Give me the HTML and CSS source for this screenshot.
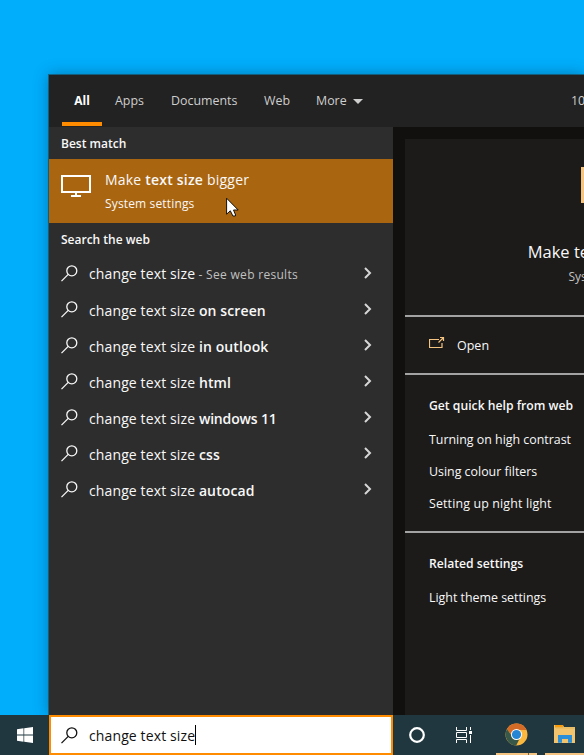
FILE: index.html
```
<!DOCTYPE html>
<html lang="en">
<head>
<meta charset="utf-8">
<title>Search</title>
<link rel="stylesheet" href="styles.css">
</head>
<body>
<svg width="0" height="0" class="defs">
  <symbol id="mag" viewBox="0 0 17 17"><circle cx="10.8" cy="5.8" r="5" fill="none" stroke="currentColor" stroke-width="1.3"/><path d="M7.2 9.4L.5 16.1" stroke="currentColor" stroke-width="1.3"/></symbol>
  <symbol id="chev" viewBox="0 0 8 12"><path d="M1 1l5 5-5 5" fill="none" stroke="currentColor" stroke-width="2"/></symbol>
</svg>
<div class="desktop">
  <main class="flyout">
    <nav class="tabs">
      <span class="tab active"><span class="w-all">All</span></span>
      <span class="tab apps">Apps</span>
      <span class="tab docs">Documents</span>
      <span class="tab web">Web</span>
      <span class="tab more">More<i class="caret"></i></span>
      <span class="points">10</span>
    </nav>
    <div class="body">
      <section class="results">
        <h2>Best match</h2>
        <div class="best">
          <svg class="monitor" width="30" height="23" viewBox="0 0 30 23"><path d="M1 1h28v16H1zM15 17v4M10 21h10" fill="none" stroke="#fff" stroke-width="2"/></svg>
          <div><div class="best-title">Make <b>text size</b> bigger</div><div class="best-sub">System settings</div></div>
        </div>
        <h2>Search the web</h2>
        <div class="row first"><svg class="mag"><use href="#mag"/></svg><span>change text size<small> - See web results</small></span><svg class="chev"><use href="#chev"/></svg></div>
        <div class="row"><svg class="mag"><use href="#mag"/></svg><span>change text size <b>on screen</b></span><svg class="chev"><use href="#chev"/></svg></div>
        <div class="row"><svg class="mag"><use href="#mag"/></svg><span>change text size <b>in outlook</b></span><svg class="chev"><use href="#chev"/></svg></div>
        <div class="row"><svg class="mag"><use href="#mag"/></svg><span>change text size <b>html</b></span><svg class="chev"><use href="#chev"/></svg></div>
        <div class="row"><svg class="mag"><use href="#mag"/></svg><span>change text size <b class="tight">windows 11</b></span><svg class="chev"><use href="#chev"/></svg></div>
        <div class="row"><svg class="mag"><use href="#mag"/></svg><span>change text size <b>css</b></span><svg class="chev"><use href="#chev"/></svg></div>
        <div class="row"><svg class="mag"><use href="#mag"/></svg><span>change text size <b>autocad</b></span><svg class="chev"><use href="#chev"/></svg></div>
      </section>
      <section class="preview">
        <div class="card">
          <div class="hero"><div class="hero-icon"></div><div class="hero-title">Make text size bigger</div><div class="hero-sub">System settings</div></div>
          <div class="open"><svg width="16" height="12" viewBox="0 0 16 12"><path d="M10 2.500H.5v8h12.500V6M9.500 5.500L14 1M11 .5h3.500V4" fill="none" stroke="#f5c480" stroke-width="1.200"/></svg><span>Open</span></div>
          <div class="links">
            <h3>Get quick help from web</h3>
            <p>Turning on high contrast</p><p>Using colour filters</p><p class="wide">Setting up night light</p>
          </div>
          <div class="links related"><h3>Related settings</h3><p>Light theme settings</p></div>
        </div>
      </section>
    </div>
  </main>
  <footer class="taskbar">
    <div class="start"><svg width="16" height="16" viewBox="0 0 16 16" fill="#fff"><path d="M0 2.200L6.500 1.300V7.600H0zM7.200 1.200L16 0V7.600H7.200zM0 8.400H6.500V14.700L0 13.800zM7.200 8.400H16V16L7.200 14.800z"/></svg></div>
    <div class="search"><svg class="mag"><use href="#mag"/></svg><span class="query">change text size</span><i class="text-cursor"></i></div>
    <div class="task cortana"><svg width="16" height="16" viewBox="0 0 16 16"><circle cx="8" cy="8" r="6.800" fill="none" stroke="#fff" stroke-width="2.200"/></svg></div>
    <div class="task view"><svg width="17" height="16" viewBox="0 0 17 16"><path d="M.5 0v3.500h10V0M.5 16v-3.500h10V16M.5 5.500h10v5H.5zM14.500 0v3M14.500 8v8" fill="none" stroke="#fff"/><path d="M13 4h3v3h-3z" fill="#fff"/></svg></div>
    <div class="task running chrome"><svg width="23" height="23" viewBox="0 0 23 23"><circle cx="11.500" cy="11.500" r="11" fill="#fbb83f"/><path d="M2 6A11 11 0 0 1 21.500 7H11.500L7.500 13.500z" fill="#d46b27"/><path d="M2 6A11 11 0 0 0 11.200 22.500L15.500 14 7.300 13.500z" fill="#38594a"/><circle cx="11.500" cy="11.500" r="5.500" fill="#fff"/><circle cx="11.500" cy="11.500" r="4.600" fill="#2686d3"/></svg><i class="stack"></i></div>
    <div class="task running explorer"><svg width="22" height="18" viewBox="0 0 22 18"><path d="M0 0h9l1 2h11v16H0z" fill="#f2c46d"/><path d="M1 0h8v2.500H1z" fill="#f79b0c"/><path d="M2 3h19" stroke="#dfb65e"/><path d="M4 17.800V10h14v7.800h-4V14H8v3.800z" fill="#2b8ed8"/></svg></div>
  </footer>
  <svg class="pointer" width="13" height="20" viewBox="0 0 13 20"><path d="M.6 1.200V17.200L4.300 13.800 6.900 19H9.300L9.600 18 7.500 13H12.200z" fill="#fff" stroke="#16110b"/></svg>
</div>
</body>
</html>
```
FILE: styles.css
```
* { box-sizing: border-box; }
body { margin: 0; overflow: hidden; font-family: "Open Sans", "Noto Sans", sans-serif; color: #f8f8f8; }
h2, h3, p { margin: 0; }
svg { flex: none; display: block; }
.defs { position: absolute; }
b, h2, h3 { font-weight: 600; }
.desktop { width: 584px; height: 755px; display: flex; flex-direction: column; position: relative; overflow: hidden; background: #00aefc; white-space: nowrap; }
.flyout { margin: 75px 0 0 49px; height: 640px; width: 535px; box-shadow: 0 0 14px rgba(0, 30, 50, .4), 0 0 0 1px #176e91; display: flex; flex-direction: column; background: #2d2d2d; }
.tabs { height: 52px; flex: none; background: #222; display: flex; padding-left: 13px; font-size: 12.400px; line-height: 52px; color: #cecece; overflow: hidden; }
.tab { flex: none; }
.active { width: 40px; text-align: center; border-bottom: 4px solid #ff8c00; height: 51px; color: #fff; font-weight: 700; font-size: 12px; margin-right: 13px; }
.apps { width: 56px; }
.docs { width: 93px; }
.web { width: 52px; }
.more { display: flex; align-items: center; width: 255px; }
.caret { border: 5.500px solid transparent; border-top-color: #cecece; border-bottom: 0; margin-left: 6px; }
.body { display: flex; flex: 1; }
.results { width: 344px; background: #2d2d2d; flex: none; }
h2 { font-size: 12px; line-height: 30px; padding: 2px 0 0 12px; height: 32px; }
.best { background: #a96510; height: 64px; display: flex; padding: 10px 0 0 12px; }
.monitor { margin: 6px 14px 0 0; }
.best-title { font-size: 14px; line-height: 22px; letter-spacing: .21px; }
.best-sub { font-size: 12px; line-height: 25px; letter-spacing: .15px; }
.row { height: 36px; display: flex; align-items: center; padding: 0 21px 0 12px; font-size: 14px; letter-spacing: .12px; }
.tight { letter-spacing: -.16px; }
.first { height: 37px; }
.row span { flex: 1; }
.row small { font-size: 12px; color: #c0c0c0; letter-spacing: .3px; }
.mag { width: 17px; height: 17px; margin-right: 11px; }
.row .mag { margin-top: -1px; }
.chev { width: 8px; height: 12px; color: #d6d6d6; margin-top: -2px; }
.preview { flex: 1; background: #11100e; padding: 12px 0 0 12px; overflow: hidden; }
.card { background: #1c1b1a; height: 576px; }
.hero { height: 178px; border-bottom: 2px solid #a3a3a3; padding-top: 28px; width: 400px; display: flex; flex-direction: column; align-items: center; }
.hero-icon { width: 48px; height: 36px; background: #f5c480; }
.hero-title { font-size: 16.500px; line-height: 26px; margin-top: 36px; padding-left: 7px; }
.hero-sub { font-size: 12px; line-height: 24px; padding-left: 14px; color: #c2c2c2; }
.open { height: 58px; border-bottom: 2px solid #a3a3a3; display: flex; align-items: center; padding-left: 24px; gap: 12px; font-size: 12.500px; }
.open svg { margin-top: -5px; }
.links { height: 158px; border-bottom: 2px solid #a3a3a3; padding: 13px 0 0 24px; font-size: 12.400px; line-height: 32px; }
.links h3 { font-size: 12.200px; line-height: 35px; margin-bottom: 1px; }
.wide { letter-spacing: .15px; }
.related { border: 0; }
.taskbar { height: 40px; background: #213740; display: flex; flex: none; }
.start { width: 49px; flex: none; display: grid; place-items: center; padding-left: 1px; }
.search { width: 344px; flex: none; background: #fff; border: 2px solid #ff8c00; display: flex; align-items: center; padding-left: 10px; color: #111; font-size: 14px; letter-spacing: .12px; }
.text-cursor { width: 1px; height: 20px; background: #000; }
.task { display: grid; place-items: center; width: 48px; flex: none; position: relative; }
.view { width: 47px; }
.chrome { margin-left: 8px; width: 41px; border-bottom: 2px solid #f5c480; }
.stack { position: absolute; right: 8px; bottom: -2px; width: 1px; height: 2px; background: #6e6652; }
.explorer { margin-left: 8px; width: 40px; border-bottom: 2px solid #f5c480; }
.pointer { position: absolute; left: 226px; top: 197px; }
```
